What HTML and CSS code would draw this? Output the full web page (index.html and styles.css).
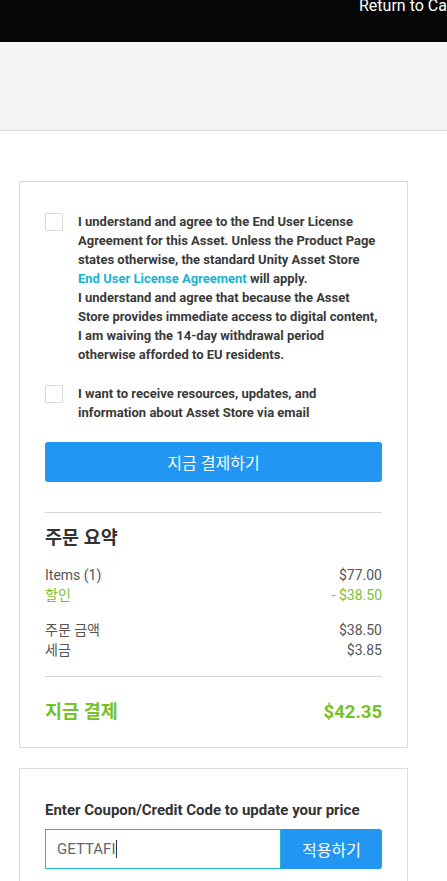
FILE: index.html
```html
<!DOCTYPE html>
<html lang="ko">
<head>
<meta charset="utf-8">
<link rel="stylesheet" href="styles.css">
</head>
<body>
<header class="topbar"><a class="return-link">Return to Cart</a></header>
<div class="subbar"></div>
<main class="main">
  <section class="card checkout">
    <label class="check-row">
      <span class="box"></span>
      <span class="check-text">I understand and agree to the End User License Agreement for this Asset. Unless the Product Page states otherwise, the standard Unity Asset Store <a class="link">End User License Agreement</a> will apply.<br>I understand and agree that because the Asset Store provides immediate access to digital content, I am waiving the 14-day withdrawal period otherwise afforded to EU residents.</span>
    </label>
    <label class="check-row second">
      <span class="box"></span>
      <span class="check-text">I want to receive resources, updates, and information about Asset Store via email</span>
    </label>
    <button class="pay-btn">지금 결제하기</button>
    <hr class="divider">
    <h2 class="summary-title">주문 요약</h2>
    <div class="rows">
      <div class="row"><span>Items (1)</span><span>$77.00</span></div>
      <div class="row green"><span>할인</span><span>- $38.50</span></div>
    </div>
    <div class="rows">
      <div class="row"><span>주문 금액</span><span>$38.50</span></div>
      <div class="row"><span>세금</span><span>$3.85</span></div>
    </div>
    <hr class="divider low">
    <div class="total"><span>지금 결제</span><span>$42.35</span></div>
  </section>
  <section class="card coupon">
    <div class="coupon-label">Enter Coupon/Credit Code to update your price</div>
    <div class="coupon-form">
      <div class="coupon-input">GETTAFI<span class="caret"></span></div>
      <button class="apply-btn">적용하기</button>
    </div>
  </section>
</main>
</body>
</html>
```
FILE: styles.css
```css
html, body {
  margin: 0;
  padding: 0;
  background: #fff;
  font-family: Roboto, "Noto Sans CJK KR", sans-serif;
  color: #333;
  overflow: hidden;
}
.topbar {
  height: 42px;
  background: #060606;
  padding-left: 359px;
  white-space: nowrap;
  overflow: hidden;
}
.return-link {
  color: #fff;
  font-size: 16px;
  line-height: 12px;
  display: block;
}
.subbar {
  height: 88px;
  background: #f4f4f4;
  border-bottom: 1px solid #dcdcdc;
}
.main {
  padding-top: 50px;
  padding-left: 19px;
  display: flex;
  flex-direction: column;
  gap: 20px;
}
.card {
  width: 389px;
  box-sizing: border-box;
  border: 1px solid #dcdcdc;
  padding: 30px 25px 23px 25px;
  background: #fff;
}
.check-row {
  display: flex;
  align-items: flex-start;
  gap: 15px;
}
.check-row.second {
  margin-top: 20px;
}
.box {
  flex: none;
  width: 16px;
  height: 16px;
  border: 1px solid #d8d8d8;
  border-radius: 1px;
  margin-top: 0.5px;
}
.check-text {
  font-size: 13px;
  font-weight: 700;
  line-height: 19px;
  color: #3a3a3a;
}
.link {
  color: #1ab3cf;
}
.pay-btn {
  display: block;
  width: 100%;
  height: 40px;
  margin-top: 20px;
  border: 0;
  border-radius: 3px;
  background: #2196f3;
  color: #fff;
  font-family: Roboto, "Noto Sans CJK KR", sans-serif;
  font-size: 16px;
  padding: 0;
}
.divider {
  border: 0;
  border-top: 1px solid #d6d6d6;
  margin: 30px 0 0 0;
}
.divider.low {
  margin-top: 16px;
}
.summary-title {
  margin: 13px 0 0 0;
  font-size: 18.5px;
  line-height: 24px;
  font-weight: 700;
  color: #333;
}
.rows {
  margin-top: 15px;
}
.rows + .rows {
  margin-top: 15px;
}
.row {
  display: flex;
  justify-content: space-between;
  font-size: 14px;
  line-height: 20px;
  color: #555;
}
.row.green {
  color: #78c22d;
}
.total {
  display: flex;
  justify-content: space-between;
  margin-top: 23px;
  font-size: 18.5px;
  line-height: 24px;
  font-weight: 700;
  color: #74c12a;
}
.coupon {
  padding-top: 31px;
  padding-bottom: 30px;
}
.coupon-label {
  font-size: 15px;
  font-weight: 700;
  line-height: 20px;
  color: #333;
}
.coupon-form {
  display: flex;
  margin-top: 9px;
  height: 40px;
}
.coupon-input {
  flex: 1;
  box-sizing: border-box;
  border: 1px solid #1ab8d0;
  padding-left: 11px;
  display: flex;
  align-items: center;
  font-size: 15px;
  color: #666;
}
.caret {
  display: inline-block;
  width: 1px;
  height: 18px;
  background: #333;
  margin-left: 1px;
}
.apply-btn {
  width: 101px;
  border: 0;
  border-radius: 0 3px 3px 0;
  background: #2196f3;
  color: #fff;
  font-family: Roboto, "Noto Sans CJK KR", sans-serif;
  font-size: 16px;
  padding: 0;
}
```
